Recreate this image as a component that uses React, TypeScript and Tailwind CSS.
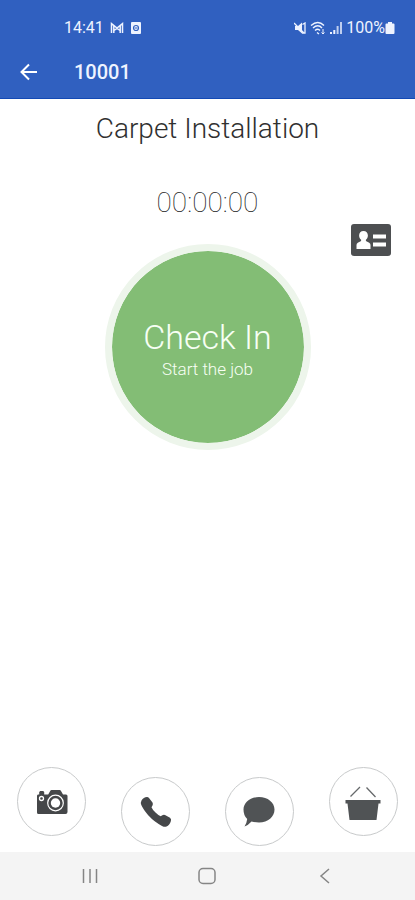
import React, { useEffect, useState } from "react";

const formatTime = (total: number) => {
  const h = Math.floor(total / 3600);
  const m = Math.floor((total % 3600) / 60);
  const s = total % 60;
  return [h, m, s].map((n) => String(n).padStart(2, "0")).join(":");
};

const CameraIcon = () => (
  <svg className="w-8 h-8" viewBox="0 0 32 32" fill="#454749">
    <path d="M2 8.500h1.200V6l1-1h3l1 1v2.500h4l2-3.600q.4-.9 1.400-.9h8q1 0 1.400.9l2 3.600h3q1.500 0 1.500 1.500v16q0 2-2 2H2.500q-1.500 0-1.500-1.500V10q0-1.500 1-1.500z" />
    <circle cx="19.500" cy="17" r="7.800" stroke="#fff" strokeWidth="1.200" />
    <circle cx="19.500" cy="17" r="4.700" fill="#fff" />
    <circle cx="5.500" cy="12.500" r="2" stroke="#fff" strokeWidth="1.300" />
  </svg>
);

const PhoneIcon = () => (
  <svg className="w-8 h-8" viewBox="0 0 32 32" fill="#454749">
    <path d="M1.500 4.500Q3.500 1.200 7 1Q8.300 1 9.200 2.200L12.500 6.600Q13.300 8 12.500 9.500L11.500 11.200Q12.500 13.800 15.500 16.500Q18.500 19.500 20.700 20.300L22.300 19.300Q23.600 18.300 25 19L30 21.800Q31.600 23 30.900 24.900Q29.600 29.200 26.500 30.500Q24.600 31.300 22 29.900Q14.500 26.200 8.200 19.300Q3.200 13.300 1.300 9Q.3 6.500 1.500 4.500z" />
  </svg>
);

const ChatIcon = () => (
  <svg className="w-8 h-8" viewBox="0 0 32 32" fill="#505355">
    <path d="M16 1C24.800 1 31.500 6.500 31.500 13.500C31.500 20.800 25 26.500 16 26.500Q12 26.500 8.500 25.500Q5.500 29 1.500 30.500Q3.800 27 4.200 23Q.5 19.500 .5 13.500C.5 6.500 7.200 1 16 1z" />
  </svg>
);

const BasketIcon = () => (
  <svg className="w-9 h-9" viewBox="0 0 36 36" fill="#505355">
    <path d="M5.500 12.500L15 3M21.500 3.500L30.500 13" stroke="#66696b" strokeWidth="1.300" fill="none" />
    <path d="M.5 16h35v3.500h-2L31.500 36h-27L2.500 19.500h-2z" />
  </svg>
);

const actions = [
  { label: "Take a photo", Icon: CameraIcon, margin: "mb-4" },
  { label: "Call", Icon: PhoneIcon, margin: "mb-1.5" },
  { label: "Message", Icon: ChatIcon, margin: "mb-1.5" },
  { label: "Materials", Icon: BasketIcon, margin: "mb-4" },
];

const StatusBar = () => (
  <div className="flex items-center justify-between h-14 pl-16 pr-5 text-base">
    <div className="flex items-center gap-1.5">
      <span>14:41</span>
      <svg className="w-3.5 h-3.5" viewBox="0 0 14 14" fill="none" stroke="currentColor">
        <path d="M1.500 12V2.500L7 7l5.500-4.500V12M3.800 12V4.500M10.200 12V4.500M4 9.500l3-2 3 2" strokeWidth="1.500" />
      </svg>
      <svg className="w-3 h-3" viewBox="0 0 12 12">
        <rect x="1" width="10" height="12" rx="1" fill="currentColor" />
        <circle cx="6" cy="6" r="2.500" fill="none" stroke="#3060c0" strokeWidth="1.200" />
        <path d="M4.500 6h3" stroke="#3060c0" />
      </svg>
    </div>
    <div className="flex items-center gap-1">
      <svg className="w-3 h-3" viewBox="0 0 12 12" fill="currentColor">
        <path d="M1 4h3l4-3.500v11L4 8H1z" />
        <path d="M0 1l10 10M8.500 2.500L11 1v10H8" stroke="currentColor" strokeWidth="1.300" fill="none" />
      </svg>
      <svg className="w-4 h-3.5" viewBox="0 0 16 14" fill="none" stroke="currentColor" strokeWidth="1.400">
        <path d="M1 4.500Q8-1.500 14 4.500M3 7Q8 2.500 12 7M5 9.500Q8 7 10 9.500M7 11.500l2 1.500" />
        <path d="M13 8v5M11.500 11.500l1.500 1.500 1.500-1.500" strokeWidth="1" />
      </svg>
      <svg className="w-3 h-3" viewBox="0 0 12 12" fill="currentColor">
        <path d="M0 10h2v2H0zM3.300 8h2v4h-2z" />
        <path d="M6.600 4h2v8h-2zM10 0h2v12h-2z" opacity=".75" />
      </svg>
      <div className="flex items-center">
        <span>100%</span>
        <svg className="w-2.5 h-3" viewBox="0 0 10 12" fill="currentColor">
          <path d="M3 0h4v1.500h1.500q1 0 1 1V11q0 1-1 1h-7q-1 0-1-1V2.500q0-1 1-1H3z" />
        </svg>
      </div>
    </div>
  </div>
);

const App = () => {
  const [running, setRunning] = useState(false);
  const [seconds, setSeconds] = useState(0);

  useEffect(() => {
    if (!running) return;
    const timer = setInterval(() => setSeconds((prev) => prev + 1), 1000);
    return () => clearInterval(timer);
  }, [running]);

  return (
    <div className="min-h-screen flex flex-col bg-white font-['Roboto',sans-serif]">
      {/* Header */}
      <header className="bg-[#3060c0] text-[#eef3ff] border-b border-[#1249b5]">
        <StatusBar />
        <div className="flex items-start h-[42px] pt-0.5 px-5 gap-9">
          <button aria-label="Back" className="h-7 text-white">
            <svg className="w-[18px] h-[18px]" viewBox="0 0 18 18" fill="none" stroke="currentColor" strokeWidth="2">
              <path d="M17 9H2M9 1.500L1.500 9L9 16.500" />
            </svg>
          </button>
          <h1 className="text-xl font-medium">10001</h1>
        </div>
      </header>

      {/* Job */}
      <main className="flex-1 flex flex-col items-center pt-3">
        <h2 className="text-[28px] leading-9 font-light text-[#303030]">Carpet Installation</h2>
        <time className="mt-9 text-[28px] leading-10 font-thin text-[#202020]">{formatTime(seconds)}</time>
        <button aria-label="Customer details" className="self-end mt-px mr-6">
          <svg className="w-10 h-8" viewBox="0 0 40 32">
            <rect width="40" height="32" rx="3" fill="#4d4f51" />
            <g fill="#fff">
              <path d="M12.500 7c2.700 0 4.400 2 4.400 4.600 0 1.800-.8 3.300-2 4.200v1.100l3.300 1.800q1.300.7 1.300 2.300v4H5.500v-4q0-1.600 1.300-2.300l3.300-1.800v-1.100c-1.200-.9-2-2.400-2-4.200C8.100 9 9.800 7 12.500 7z" />
              <path d="M22 10.500h13v4H22zM22 18.500h13v4H22z" />
            </g>
          </svg>
        </button>
        <button
          onClick={() => setRunning(true)}
          className="-mt-3 w-[206px] h-[206px] rounded-full border-[7px] border-[#edf5eb] bg-[#83bd75] bg-clip-padding text-[#f7fff4] flex flex-col items-center justify-center pt-1"
        >
          <span className="text-[34px] leading-10 font-light">Check In</span>
          <span className="text-[17px] leading-6 font-light">Start the job</span>
        </button>
      </main>

      {/* Actions */}
      <div className="grid grid-cols-4 items-end justify-items-center">
        {actions.map(({ label, Icon, margin }) => (
          <button
            key={label}
            aria-label={label}
            className={`w-[69px] h-[69px] rounded-full border border-[#c8cacb] flex items-center justify-center ${margin}`}
          >
            <Icon />
          </button>
        ))}
      </div>

      {/* System navigation */}
      <nav className="h-12 bg-[#f4f4f4] flex items-center justify-around px-8 text-[#858585]">
        <button aria-label="Recent apps">
          <svg className="w-4 h-4" viewBox="0 0 16 16" stroke="currentColor" strokeWidth="1.500">
            <path d="M1.500 1v14M8 1v14M14.500 1v14" />
          </svg>
        </button>
        <button aria-label="Home">
          <svg className="w-[18px] h-[18px]" viewBox="0 0 18 18" fill="none" stroke="currentColor" strokeWidth="1.500">
            <rect x="1" y="1.500" width="16" height="15" rx="4" />
          </svg>
        </button>
        <button aria-label="Back to previous screen">
          <svg className="w-4 h-4" viewBox="0 0 16 16" fill="none" stroke="currentColor" strokeWidth="1.500">
            <path d="M12 1L4 8L12 15" />
          </svg>
        </button>
      </nav>
    </div>
  );
};

export default App;
